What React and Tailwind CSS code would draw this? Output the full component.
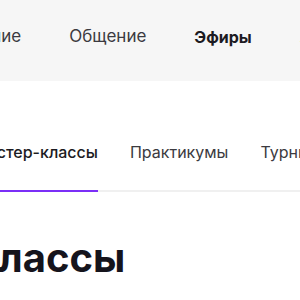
const NAV = ["Обучение", "Общение", "Эфиры", "Архив"];
const TABS = ["Мастер-классы", "Практикумы", "Турниры"];

export default function App() {
  return (
    <div className="w-[300px] h-[300px] overflow-hidden bg-white font-['Inter',sans-serif]">
      {/* top nav */}
      <header className="h-[81px] bg-[#f6f6f6] flex items-center pb-[8px]">
        <nav className="flex items-center gap-12 ml-[-61px] whitespace-nowrap">
          {NAV.map((item) => (
            <span
              key={item}
              className={
                item === "Эфиры"
                  ? "text-[16px] font-bold text-[#1c1b22]"
                  : "text-[17px] text-[#3b3a40]"
              }
            >
              {item}
            </span>
          ))}
        </nav>
      </header>

      {/* tabs */}
      <div className="mt-[59px] border-b-2 border-[#f0f0f0]">
        <div className="flex gap-8 ml-[-27px] whitespace-nowrap">
          {TABS.map((tab, i) => (
            <div
              key={tab}
              className={
                i === 0
                  ? "pb-[26px] border-b-2 border-[#7b2ff7] -mb-[2px] text-[16px] font-medium text-[#1c1b22]"
                  : "pb-[26px] text-[16px] text-[#3b3a40]"
              }
            >
              {tab}
            </div>
          ))}
        </div>
      </div>

      {/* heading */}
      <h1 className="mt-[46px] ml-[-196px] whitespace-nowrap text-[40px] leading-none font-bold text-[#15141c]">
        Мастер-классы
      </h1>
    </div>
  );
}
